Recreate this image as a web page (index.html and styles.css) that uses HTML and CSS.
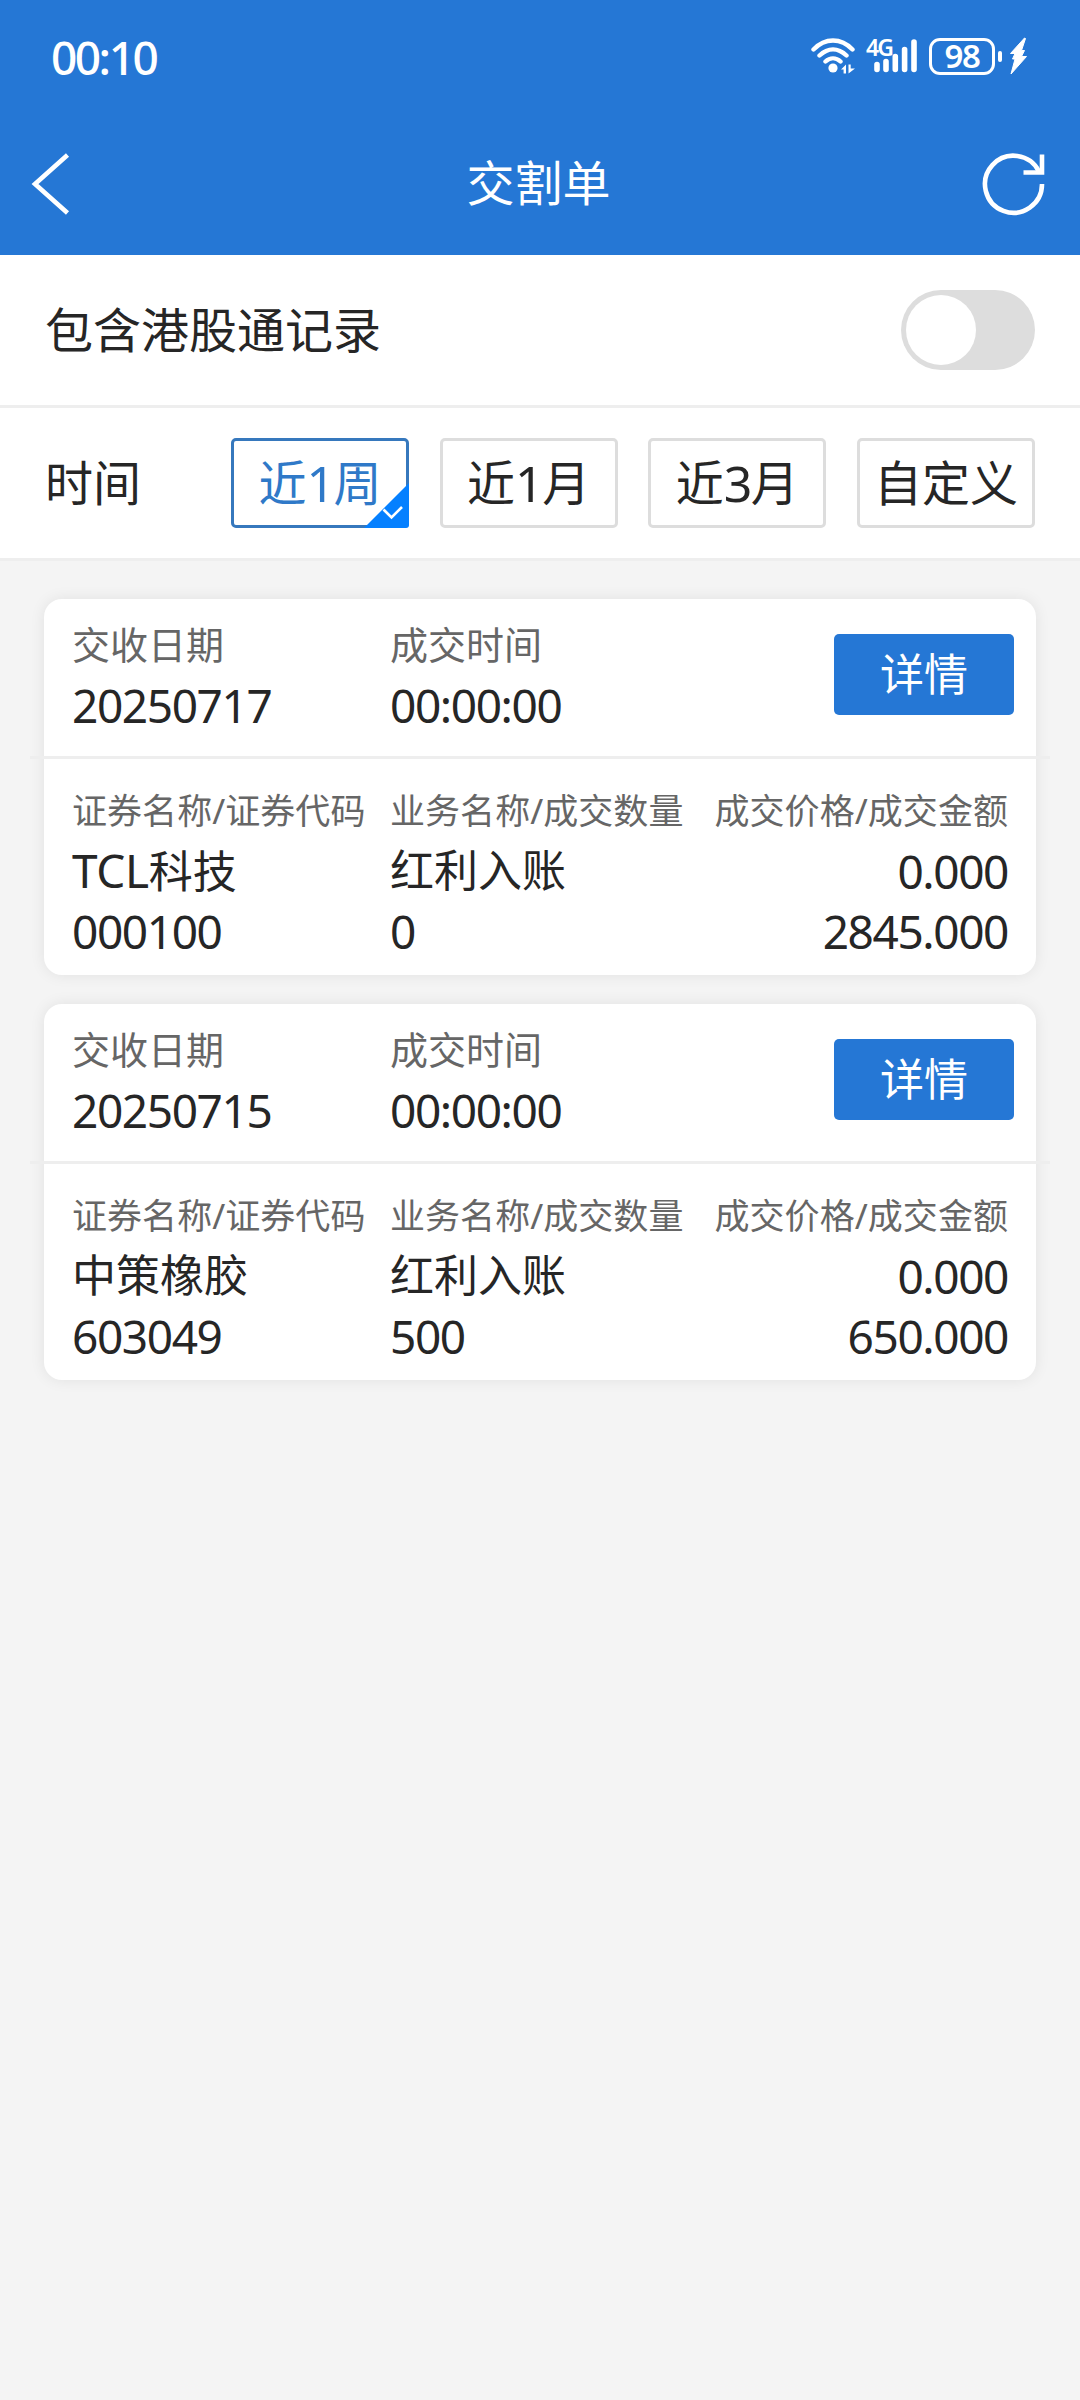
FILE: index.html
```html
<!DOCTYPE html>
<html lang="zh-CN">
<head>
<meta charset="utf-8">
<title>交割单</title>
<link rel="stylesheet" href="styles.css">
</head>
<body>
<header class="header">
  <div class="status">
    <span class="clock">00:10</span>
    <div class="status-icons">
      <svg class="wifi" width="46" height="38" viewBox="0 0 46 38" fill="none" stroke="#fff" stroke-width="4.400" stroke-linecap="round">
        <path d="M2.500 12.500C14 .5 30 .5 41.500 12.500M8.500 18.500C17 10.500 27 10.500 35.500 18.500M14.500 24.500C19 20.300 25 20.300 29.500 24.500"/>
        <circle cx="22" cy="31" r="4.600" fill="#fff" stroke="none"/>
        <path d="M30 32.500l5-5v9h-2.400v-4zM37.500 27.500h2.200v4h4.300l-6.500 5z" fill="#fff" stroke="none"/>
      </svg>
      <div class="cell">
        <span class="net">4G</span>
        <svg class="bars" width="52" height="38" viewBox="0 0 52 38" stroke="#fff" stroke-width="5.600" stroke-linecap="round">
          <path d="M11 27.500v5M20 24.500v8M29.300 19.500v13M38.600 12.500v20M48 5v27.500"/>
        </svg>
      </div>
      <div class="battery"><span class="level">98</span></div>
      <span class="nub"></span>
      <svg class="bolt" width="17" height="38" viewBox="0 0 17 38">
        <path d="M14.500 1L.5 16.500H5L2.500 22H5L1 37L16.500 19.500H11.500L14.500 13.500H11.500L15.500 1.500z" fill="#fff" stroke="#fff" stroke-linejoin="round"/>
      </svg>
    </div>
  </div>
  <nav class="nav">
    <svg width="40" height="64" viewBox="0 0 40 64" fill="none" stroke="#fff" stroke-width="4.600">
      <path d="M36.500 3L4 32L36.500 61"/>
    </svg>
    <h1 class="title">交割单</h1>
    <svg width="64" height="64" viewBox="0 0 64 64" fill="none" stroke="#fff" stroke-width="4.600">
      <path d="M60 32A28.500 28.500 0 1 1 57 19.500"/>
      <path d="M60 2.500V20.500H41.500"/>
    </svg>
  </nav>
</header>

<section class="row">
  <span>包含港股通记录</span>
  <span class="switch"><span class="knob"></span></span>
</section>
<section class="row">
  <span class="row-label">时间</span>
  <div class="ranges">
    <span class="range active">近<span class="num">1</span>周
      <svg class="check" width="45" height="45" viewBox="0 0 45 45">
        <path d="M45 0V42Q45 45 42 45H0z" fill="#0580ff"/>
        <path d="M19.500 26.500L27.500 34.500L38 24" fill="none" stroke="#fff" stroke-width="2.600"/>
      </svg>
    </span>
    <span class="range">近<span class="num">1</span>月</span>
    <span class="range">近<span class="num">3</span>月</span>
    <span class="range">自定义</span>
  </div>
</section>

<main class="list">
  <article class="card">
    <div class="card-head">
      <div><p class="label">交收日期</p><p class="value">20250717</p></div>
      <div><p class="label">成交时间</p><p class="value">00:00:00</p></div>
      <span class="detail">详情</span>
    </div>
    <div class="divider"></div>
    <div class="card-body">
      <div><p class="sub">证券名称/证券代码</p><p class="value cjk"><span class="latin">TCL</span>科技</p><p class="value">000100</p></div>
      <div><p class="sub">业务名称/成交数量</p><p class="value cjk">红利入账</p><p class="value">0</p></div>
      <div class="right"><p class="sub">成交价格/成交金额</p><p class="value">0.000</p><p class="value">2845.000</p></div>
    </div>
  </article>
  <article class="card">
    <div class="card-head">
      <div><p class="label">交收日期</p><p class="value">20250715</p></div>
      <div><p class="label">成交时间</p><p class="value">00:00:00</p></div>
      <span class="detail">详情</span>
    </div>
    <div class="divider"></div>
    <div class="card-body">
      <div><p class="sub">证券名称/证券代码</p><p class="value cjk">中策橡胶</p><p class="value">603049</p></div>
      <div><p class="sub">业务名称/成交数量</p><p class="value cjk">红利入账</p><p class="value">500</p></div>
      <div class="right"><p class="sub">成交价格/成交金额</p><p class="value">0.000</p><p class="value">650.000</p></div>
    </div>
  </article>
</main>
</body>
</html>
```
FILE: styles.css
```css
* { box-sizing: border-box; }

body {
  margin: 0;
  min-height: 2400px;
  background: #f4f4f4;
  color: #262626;
  font-family: "Noto Sans", "Noto Sans CJK SC", sans-serif;
  font-size: 48px;
}

p, h1 { margin: 0; font-weight: 400; }

.header {
  height: 255px;
  background: #2577d5;
  color: #fff;
}

.status {
  height: 110px;
  padding: 2px 53px 0 51px;
  display: flex;
  align-items: center;
  justify-content: space-between;
}

.clock {
  font-size: 46px;
  font-weight: 500;
  line-height: 60px;
  letter-spacing: -2.500px;
  padding-top: 2px;
}

.status-icons { display: flex; align-items: center; }

.wifi { margin-right: 9px; }

.cell { position: relative; width: 52px; height: 38px; margin-right: 11px; }

.bars { display: block; }

.net {
  position: absolute;
  left: 0;
  top: -2px;
  font-size: 23px;
  line-height: 24px;
  font-weight: 600;
  letter-spacing: -2px;
}

.battery {
  width: 66px;
  height: 37px;
  border: 3px solid #fff;
  border-radius: 11px;
  display: flex;
  align-items: center;
  justify-content: center;
}

.level {
  font-size: 33px;
  font-weight: 600;
  line-height: 32px;
  letter-spacing: -1.500px;
}

.nub { width: 4px; height: 11px; margin: 0 8px 0 3px; border-radius: 2px; background: #fff; }

.nav {
  height: 145px;
  padding: 3px 34px 0 31px;
  display: grid;
  grid-template-columns: 64px 1fr 64px;
  align-items: center;
}

.title { font-size: 48px; line-height: 64px; padding-bottom: 3px; text-align: center; }

.row {
  height: 153px;
  padding: 0 45px 0 45px;
  display: flex;
  align-items: center;
  justify-content: space-between;
  background: #fff;
  border-bottom: 3px solid #eee;
  line-height: 64px;
}

.switch {
  width: 134px;
  height: 80px;
  padding: 5px;
  border-radius: 40px;
  background: #ddd;
}

.knob {
  display: block;
  width: 70px;
  height: 70px;
  border-radius: 50%;
  background: #fff;
}

.ranges {
  width: 804px;
  display: grid;
  grid-template-columns: repeat(4, 178px);
  justify-content: space-between;
}

.range {
  position: relative;
  height: 90px;
  border: 3px solid #ddd;
  border-radius: 5px;
  display: flex;
  align-items: center;
  justify-content: center;
}

.active { border-color: #3678bd; color: #2f79c8; }

.num { font-size: 50px; letter-spacing: -1.500px; }

.check { position: absolute; right: -3px; bottom: -3px; }

.list {
  padding: 38px 44px;
  display: flex;
  flex-direction: column;
  gap: 29px;
}

.card {
  height: 376px;
  border-radius: 18px;
  background: #fff;
  box-shadow: 0 0 15px rgba(0, 0, 0, .08);
}

.card-head, .card-body {
  display: grid;
  grid-template-columns: 318px 318px 1fr;
  padding-left: 28px;
}

.card-head { height: 157px; padding-top: 15px; padding-right: 22px; }

.card-body { padding-top: 22px; padding-right: 28px; }

.label { font-size: 38px; line-height: 60px; padding-bottom: 1px; color: #666; }

.sub { font-size: 35px; line-height: 60px; color: #666; white-space: nowrap; letter-spacing: .05px; }

.value { font-size: 46px; line-height: 60px; height: 60px; letter-spacing: -1.400px; white-space: nowrap; }

.cjk { font-size: 44px; letter-spacing: 0; line-height: 59px; }

.latin { font-size: 46px; letter-spacing: -.4px; }

.right { display: flex; flex-direction: column; align-items: flex-end; }

.detail {
  justify-self: end;
  width: 180px;
  height: 81px;
  margin-top: 20px;
  border-radius: 5px;
  background: #2577d5;
  color: #fff;
  font-size: 44px;
  line-height: 81px;
  text-align: center;
}

.divider { height: 3px; margin: 0 -14px; background: #eee; }
```
